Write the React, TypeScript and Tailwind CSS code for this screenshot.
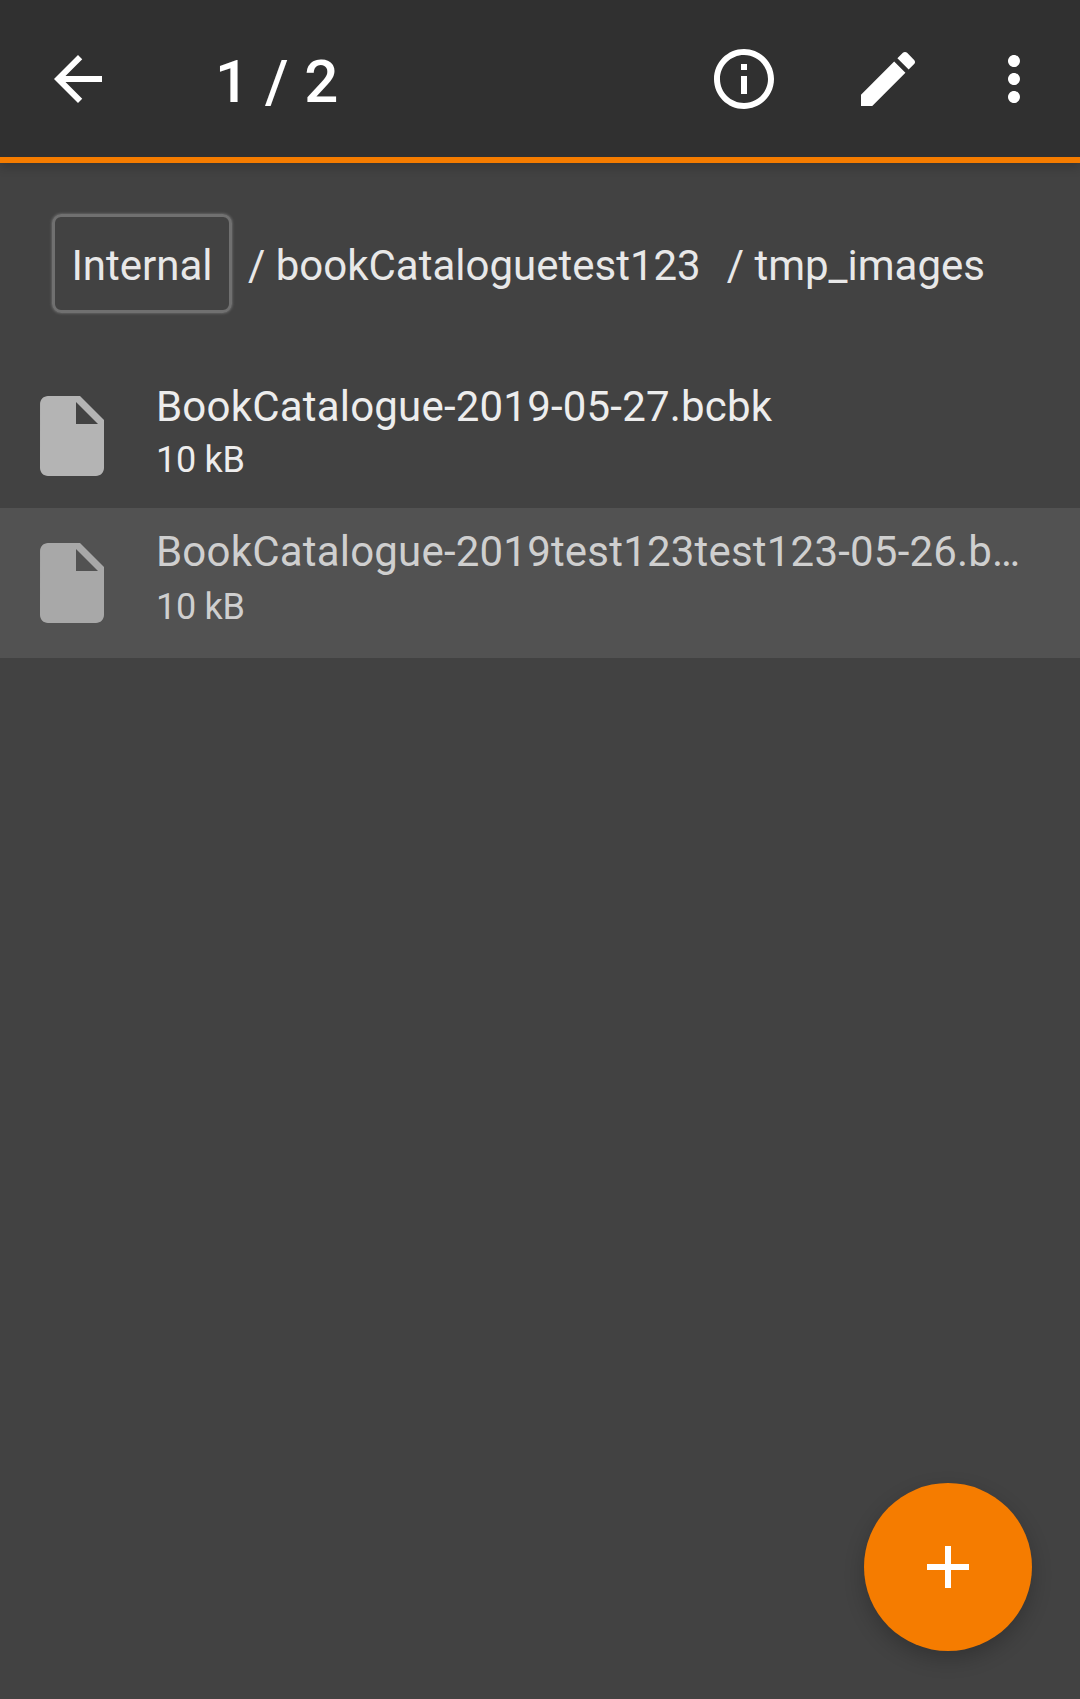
export default function App() {
  const files = [
    { name: "BookCatalogue-2019-05-27.bcbk", size: "10 kB", selected: false },
    { name: "BookCatalogue-2019test123test123-05-26.bcbk", size: "10 kB", selected: true },
  ];

  return (
    <div className="relative flex h-[1699px] w-[1080px] flex-col overflow-hidden bg-[#424242] font-['Roboto',sans-serif]">
      <header className="relative z-10 h-[163px] shrink-0 border-b-[6px] border-[#f57c00] bg-[#303030] shadow-[0_4px_10px_rgba(0,0,0,0.2)]">
        <div className="flex h-[157px] items-center pl-[42px] pr-[30px] text-white">
          <svg viewBox="0 0 24 24" fill="currentColor" className="h-[72px] w-[72px]">
            <path d="M20 11H7.83l5.59-5.59L12 4l-8 8 8 8 1.41-1.41L7.83 13H20v-2z" />
          </svg>
          <h1 className="ml-[101px] flex-1 pt-[6px] text-[60px] leading-none font-medium tracking-[0.5px]">1 / 2</h1>
          <svg viewBox="0 0 24 24" fill="currentColor" className="h-[72px] w-[72px]">
            <path d="M11 7h2v2h-2zm0 4h2v6h-2zm1-9C6.48 2 2 6.48 2 12s4.48 10 10 10 10-4.48 10-10S17.52 2 12 2zm0 18c-4.41 0-8-3.59-8-8s3.59-8 8-8 8 3.59 8 8-3.59 8-8 8z" />
          </svg>
          <svg viewBox="0 0 24 24" fill="currentColor" className="ml-[72px] h-[72px] w-[72px]">
            <path d="M3 17.25V21h3.75L17.81 9.94l-3.75-3.75L3 17.25zM20.71 7.04c.39-.39.39-1.02 0-1.41l-2.34-2.34c-.39-.39-1.02-.39-1.41 0l-1.83 1.83 3.75 3.75 1.83-1.83z" />
          </svg>
          <svg viewBox="0 0 24 24" fill="currentColor" className="ml-[54px] h-[72px] w-[72px]">
            <path d="M12 8c1.1 0 2-.9 2-2s-.9-2-2-2-2 .9-2 2 .9 2 2 2zm0 2c-1.1 0-2 .9-2 2s.9 2 2 2 2-.9 2-2-.9-2-2-2zm0 6c-1.1 0-2 .9-2 2s.9 2 2 2 2-.9 2-2-.9-2-2-2z" />
          </svg>
        </div>
      </header>

      <nav className="mt-[51px] flex h-[99px] items-center pl-[52px] text-[42px] text-[#e8e8e8]">
        <span className="flex h-[99px] w-[180px] items-center justify-center rounded-[9px] border-[3px] border-[#707070] pt-[3px] shadow-[0_0_3px_#808080]">
          Internal
        </span>
        <span className="ml-[16px] pt-[3px]">/ bookCataloguetest123</span>
        <span className="ml-[26px] pt-[3px]">/ tmp_images</span>
      </nav>

      <ul className="mt-[48px]">
        {files.map((file) => (
          <li
            key={file.name}
            className={`flex items-start pl-[24px] pr-[48px] pt-[27px] ${
              file.selected ? "h-[150px] bg-[#525252] text-[#cfcfcf]" : "h-[147px] text-[#ededed]"
            }`}
          >
            <svg
              viewBox="0 0 24 24"
              fill="currentColor"
              className={`h-[96px] w-[96px] shrink-0 ${file.selected ? "text-[#a8a8a8]" : "text-[#b4b4b4]"}`}
            >
              <path d="M6 2c-1.1 0-1.99.9-1.99 2L4 20c0 1.1.89 2 1.99 2H18c1.1 0 2-.9 2-2V8l-6-6H6zm7 7V3.5L18.5 9H13z" />
            </svg>
            <div className={`ml-[36px] min-w-0 flex-1 ${file.selected ? "-mt-[9px]" : "-mt-[7px]"}`}>
              <div className="truncate text-[42px] leading-[52px] tracking-[0.2px]">{file.name}</div>
              <div
                className={`text-[36px] leading-[50px] tracking-[-0.3px] ${file.selected ? "mt-[4px]" : "mt-[2px]"}`}
              >
                {file.size}
              </div>
            </div>
          </li>
        ))}
      </ul>

      <button className="absolute bottom-[48px] right-[48px] flex h-[168px] w-[168px] items-center justify-center rounded-full bg-[#f57c00] text-white shadow-[0_8px_20px_rgba(0,0,0,0.22)]">
        <svg viewBox="0 0 14 14" fill="currentColor" className="h-[42px] w-[42px]">
          <path d="M14 8H8v6H6V8H0V6h6V0h2v6h6v2z" />
        </svg>
      </button>
    </div>
  );
}
